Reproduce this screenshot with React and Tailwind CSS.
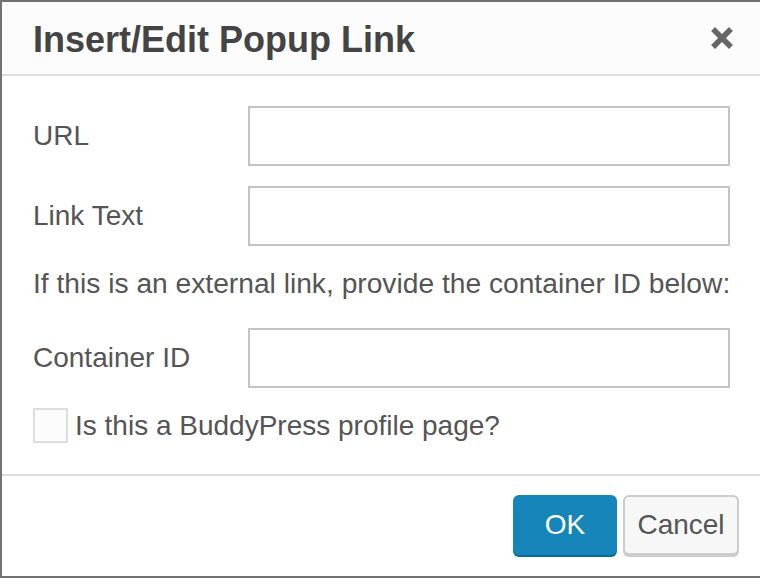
import React from 'react';

const font = { fontFamily: '"Liberation Sans", Arial, Helvetica, sans-serif' };

const Field = ({ label, className = '' }) => (
  <div className={`flex items-center h-[60px] ${className}`}>
    <label className="w-[215px] text-[28px] leading-none text-[#555]">{label}</label>
    <input
      type="text"
      className="w-[482px] h-[60px] border-2 border-[#c4c4c4] bg-white outline-none"
    />
  </div>
);

const CloseIcon = () => (
  <svg width="22" height="22" viewBox="0 0 22 22" className="text-[#666]">
    <path d="M4 4 L18 18 M18 4 L4 18" stroke="currentColor" strokeWidth="5.5" strokeLinecap="square" />
  </svg>
);

export default function App() {
  return (
    <div
      className="w-[760px] h-[578px] bg-white border-t-2 border-l-2 border-b-2 border-[#727272] flex flex-col overflow-hidden"
      style={font}
    >
      {/* header */}
      <div className="h-[74px] shrink-0 bg-[#fcfcfc] border-b-2 border-[#dddddd] flex items-center justify-between pl-[31px] pr-[27px] pt-[3px]">
        <h1 className="text-[36px] leading-[36px] font-bold text-[#444]">Insert/Edit Popup Link</h1>
        <button className="flex items-center justify-center -mt-[3px]">
          <CloseIcon />
        </button>
      </div>

      {/* body */}
      <div className="flex-1 flex flex-col pl-[31px] pt-[30px]">
        <Field label="URL" />
        <Field label="Link Text" className="mt-[20px]" />
        <div className="mt-[20px] h-[34px] flex items-center text-[28.2px] leading-none text-[#555] whitespace-nowrap">
          If this is an external link, provide the container ID below:
        </div>
        <Field label="Container ID" className="mt-[28px]" />
        <label className="mt-[20px] h-[35px] flex items-center gap-[7px]">
          <span className="w-[35px] h-[35px] border-2 border-[#dddddd] bg-[#fcfcfc] shrink-0" />
          <span className="text-[28px] leading-none text-[#555]">Is this a BuddyPress profile page?</span>
        </label>
      </div>

      {/* footer */}
      <div className="h-[102px] shrink-0 border-t-2 border-[#dddddd] flex items-start justify-end pt-[19px] pr-[21px] gap-[6px]">
        <button className="w-[104px] h-[60px] rounded-[6px] bg-[#1685ba] text-white text-[28px] leading-none shadow-[0_2px_0_#0e6a96]">
          OK
        </button>
        <button className="w-[116px] h-[60px] rounded-[6px] bg-[#f7f7f7] border-2 border-[#cccccc] text-[#555] text-[28px] leading-none shadow-[0_2px_0_#cccccc]">
          Cancel
        </button>
      </div>
    </div>
  );
}
